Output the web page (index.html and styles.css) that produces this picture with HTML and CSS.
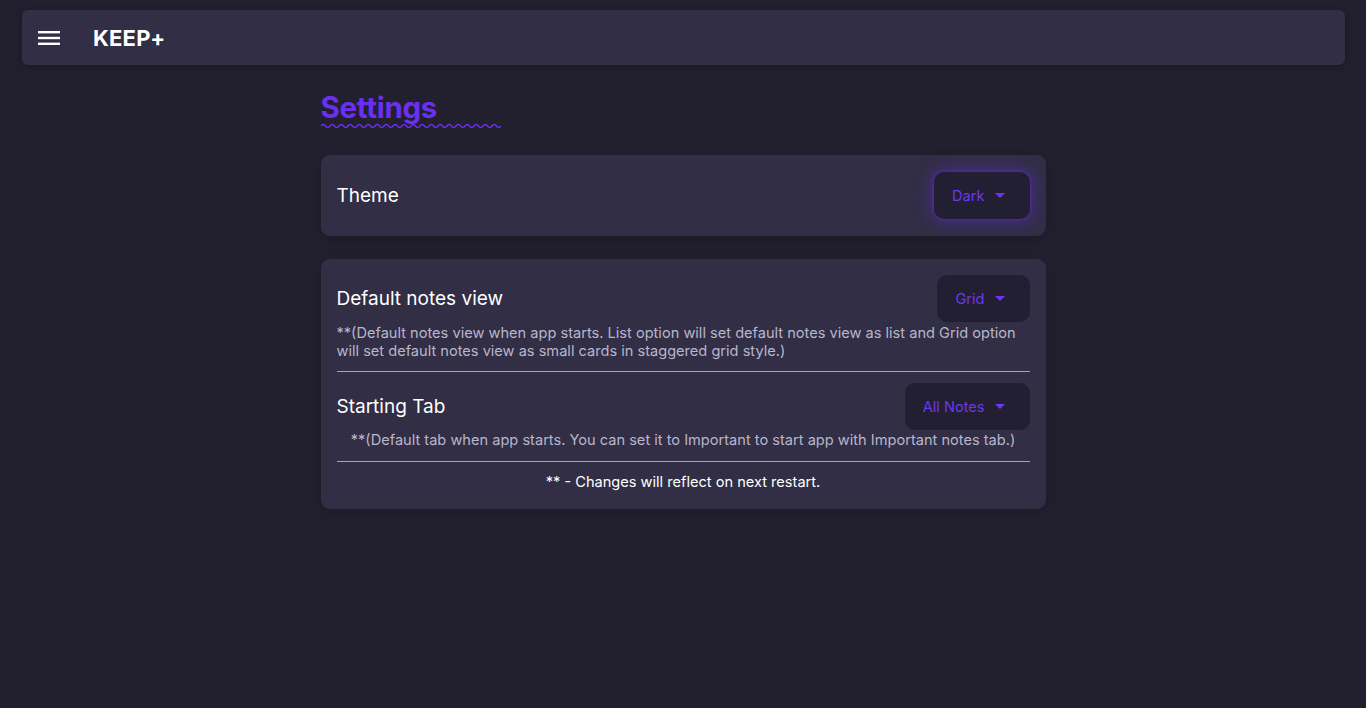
FILE: index.html
```html
<!DOCTYPE html>
<html>
<head>
<meta charset="utf-8">
<link rel="stylesheet" href="styles.css">
</head>
<body>
<header class="topbar">
  <svg class="menu" width="22" height="16" viewBox="0 0 22 16"><rect x="0" y="1" width="22" height="2.4" fill="#fff"/><rect x="0" y="6.8" width="22" height="2.4" fill="#fff"/><rect x="0" y="12.6" width="22" height="2.4" fill="#fff"/></svg>
  <div class="brand">KEEP+</div>
</header>
<main class="page">
  <h1 class="title">Settings</h1>
  <svg class="wave" width="180" height="6" viewBox="0 0 180 6"><path d="M0 3 Q2.25 0 4.5 3 T9 3 T13.5 3 T18 3 T22.5 3 T27 3 T31.5 3 T36 3 T40.5 3 T45 3 T49.5 3 T54 3 T58.5 3 T63 3 T67.5 3 T72 3 T76.5 3 T81 3 T85.5 3 T90 3 T94.5 3 T99 3 T103.5 3 T108 3 T112.5 3 T117 3 T121.5 3 T126 3 T130.5 3 T135 3 T139.5 3 T144 3 T148.5 3 T153 3 T157.5 3 T162 3 T166.5 3 T171 3 T175.5 3 T180 3" fill="none" stroke="#6a2ff0" stroke-width="1.4"/></svg>

  <section class="card card-theme">
    <div class="row">
      <div class="label">Theme</div>
      <button class="select glow">Dark <span class="caret"></span></button>
    </div>
  </section>

  <section class="card card-opts">
    <div class="row">
      <div class="label">Default notes view</div>
      <button class="select">Grid <span class="caret"></span></button>
    </div>
    <p class="desc">**(Default notes view when app starts. List option will set default notes view as list and Grid option will set default notes view as small cards in staggered grid style.)</p>
    <hr class="divider">
    <div class="row">
      <div class="label">Starting Tab</div>
      <button class="select">All Notes <span class="caret"></span></button>
    </div>
    <p class="desc center">**(Default tab when app starts. You can set it to Important to start app with Important notes tab.)</p>
    <hr class="divider second">
    <p class="note">** - Changes will reflect on next restart.</p>
  </section>
</main>
</body>
</html>
```
FILE: styles.css
```css
* { box-sizing: border-box; }
html, body { margin: 0; padding: 0; }
body {
  background: #22202e;
  font-family: "Inter", "Noto Sans", sans-serif;
  color: #fff;
  height: 708px;
  overflow: hidden;
  padding-top: 10px;
}
.topbar {
  margin: 0 21px 0 22px;
  height: 55px;
  background: #312e45;
  border-radius: 6px;
  display: flex;
  align-items: center;
  padding-left: 16px;
  box-shadow: 0 2px 8px rgba(0,0,0,0.25);
}
.menu { display: block; margin-top: 0; }
.brand {
  margin-left: 33px;
  font-weight: 700;
  font-size: 22px;
  letter-spacing: 0.2px;
}
.page {
  width: 725px;
  margin: 0 auto;
  padding-top: 24px;
}
.title {
  margin: 0;
  font-size: 29.5px;
  font-weight: 700;
  color: #6a2ff0;
  line-height: 36px;
  padding-left: 0;
  letter-spacing: -0.3px;
}
.wave { display: block; margin-top: -2px; }
.card {
  background: #312e45;
  border-radius: 9px;
  box-shadow: 0 4px 14px rgba(0,0,0,0.18);
  padding: 16px;
}
.card-theme { margin-top: 26px; padding-top: 17px; padding-bottom: 17px; }
.card-opts { margin-top: 23px; padding-bottom: 18px; }
.row {
  display: flex;
  align-items: center;
  justify-content: space-between;
}
.label { font-size: 19px; }
.select {
  font-family: inherit;
  border: none;
  background: #231f33;
  color: #6c37f2;
  font-size: 14.6px;
  height: 47px;
  border-radius: 10px;
  padding: 0 25px 0 18px;
  display: flex;
  align-items: center;
  gap: 10px;
}
.select.glow { box-shadow: 0 0 4px 0 rgba(106, 47, 240, 0.6), 0 0 18px 3px rgba(106, 47, 240, 0.35); }
.caret {
  width: 0; height: 0;
  border-left: 5px solid transparent;
  border-right: 5px solid transparent;
  border-top: 5px solid #6c37f2;
}
.desc {
  margin: 2px 0 0;
  font-size: 14.6px;
  line-height: 18px;
  color: #b9b6cc;
}
.desc.center { text-align: center; margin-top: 1px; }
.divider {
  border: none;
  height: 1px;
  background: #a7a4b5;
  margin: 11px 0 11px;
}
.divider.second { margin-top: 12px; }
.note {
  margin: 0;
  text-align: center;
  font-size: 14.6px;
}
```
